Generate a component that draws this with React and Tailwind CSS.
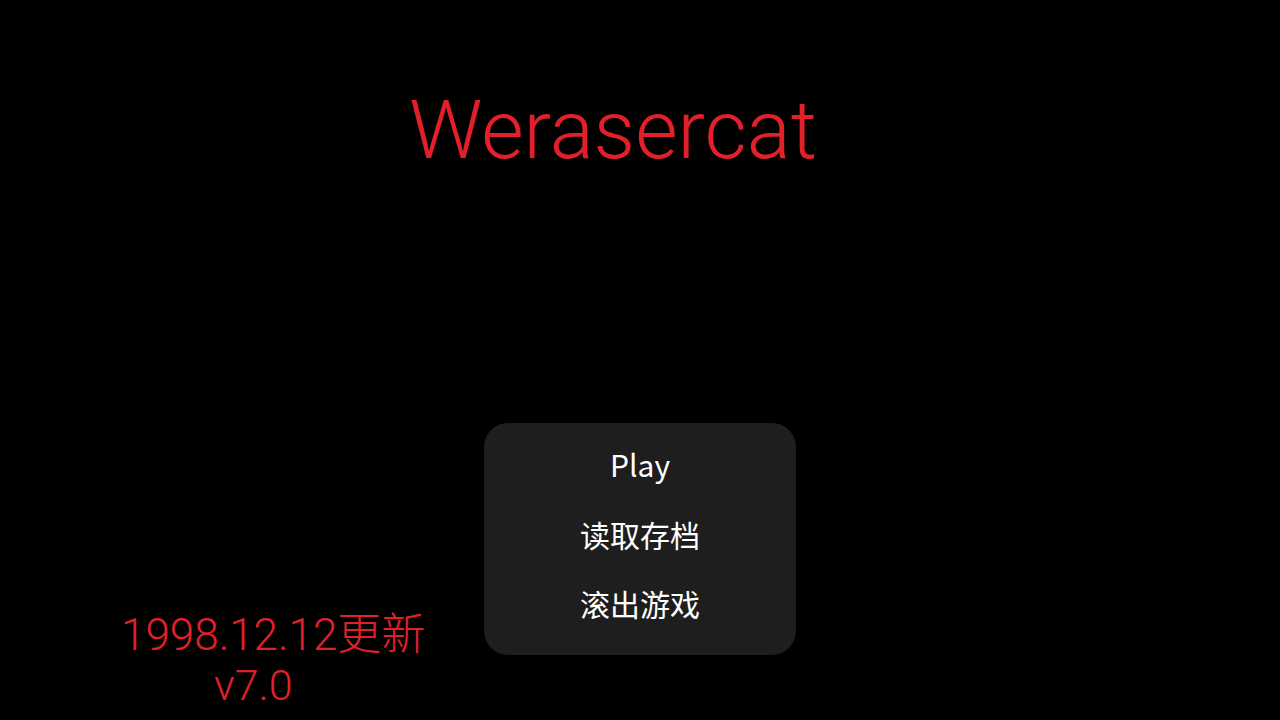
export default function App() {
  const base = { fontFamily: 'Roboto, "Noto Sans CJK SC", sans-serif' };
  const menu = { fontFamily: '"Noto Sans CJK SC", sans-serif' };
  return (
    <div className="w-[1280px] h-[720px] bg-black flex flex-col overflow-hidden" style={base}>
      <div className="pt-[89px] flex justify-center">
        <div className="text-[82px] leading-none text-[#e3202a] font-light mr-[54px]">
          Werasercat
        </div>
      </div>
      <div className="flex-1" />
      <div className="flex items-end">
        <div className="w-[484px] flex flex-col items-start pb-[10px]">
          <div className="pl-[121px] text-[44px] leading-[50px] text-[#e3202a] font-light whitespace-nowrap">1998.12.12更新</div>
          <div className="pl-[214px] text-[43px] leading-[50px] text-[#e3202a] font-light">v7.0</div>
        </div>
        <div className="w-[312px] h-[232px] mb-[65px] bg-[#1e1e1e] rounded-[24px] flex flex-col items-center pt-[23px]" style={menu}>
          <div className="h-[70px] leading-[36px] text-[30px] text-white">Play</div>
          <div className="h-[70px] leading-[36px] text-[30px] text-white">读取存档</div>
          <div className="h-[70px] leading-[36px] text-[30px] text-white">滚出游戏</div>
        </div>
      </div>
    </div>
  );
}
